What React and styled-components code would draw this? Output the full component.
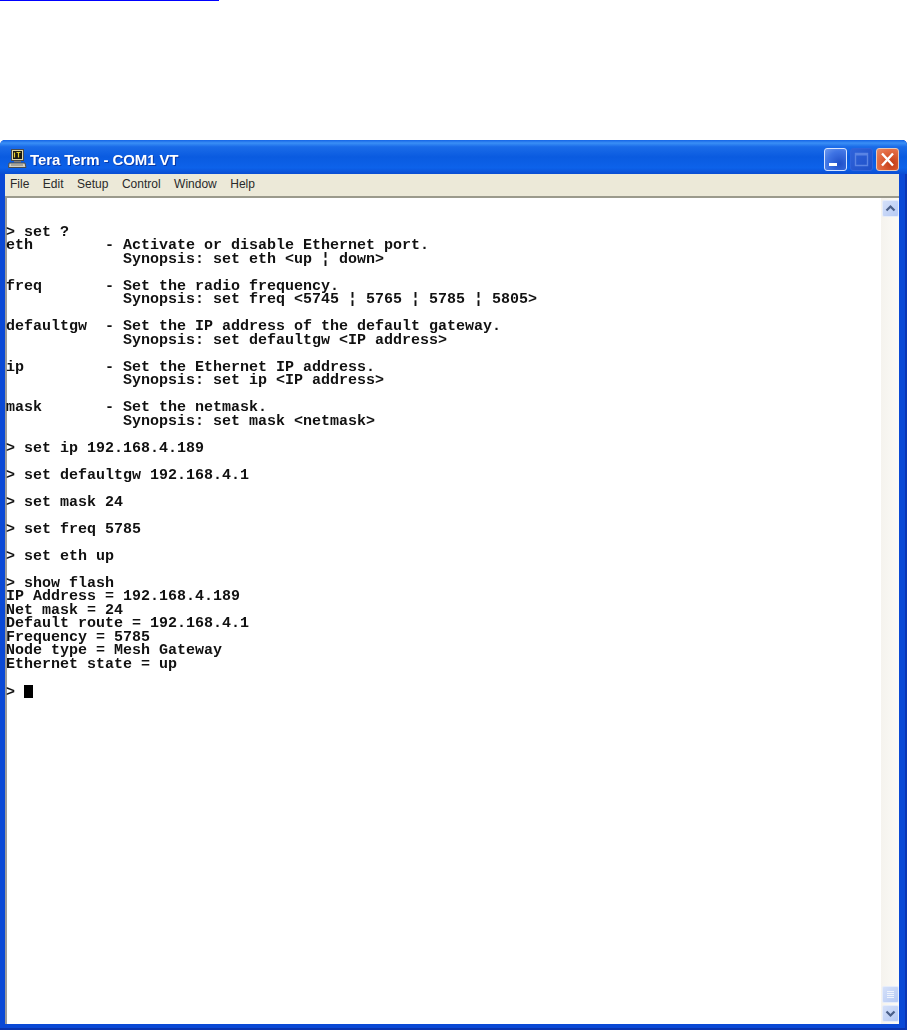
import React from "react";
import styled, { createGlobalStyle } from "styled-components";

const Global = createGlobalStyle`
  html, body { margin: 0; padding: 0; background: #fff; }
  body { width: 907px; height: 1030px; overflow: hidden; }
`;

const Page = styled.div`
  width: 907px;
  height: 1030px;
  display: flex;
  flex-direction: column;
  background: #fff;
`;

const Header = styled.div`
  height: 140px;
  flex: none;
`;

const LinkRule = styled.div`
  width: 219px;
  height: 1px;
  background: #0000ff;
`;

const Win = styled.div`
  flex: 1;
  display: flex;
  flex-direction: column;
  min-height: 0;
  background: #0a49d6;
  border-radius: 5px 5px 0 0;
  overflow: hidden;
  box-shadow: inset -2px 0 0 #0b36b4, inset 0 -2px 0 #0a34ae;
`;

const TitleBar = styled.div`
  height: 34px;
  flex: none;
  display: flex;
  align-items: center;
  padding: 0 8px 0 8px;
  background: linear-gradient(180deg, #1464e6 0%, #3a8ff6 9%, #1a6be8 20%, #0a5be0 50%, #0d62ea 82%, #0a4dd2 100%);
`;

const TitleIcon = styled.svg`
  width: 19px;
  height: 20px;
  flex: none;
  margin: 3px 3px 0 0;
`;

const TitleText = styled.div`
  flex: 1;
  color: #fff;
  font: 700 15px/20px "Liberation Sans", Arial, sans-serif;
  letter-spacing: -0.1px;
  padding-top: 6px;
  text-shadow: 1px 1px 0 #0a3aa8;
  filter: blur(0.3px);
`;

const Controls = styled.div`
  display: flex;
  gap: 3px;
`;

const CtrlButton = styled.div`
  width: 23px;
  height: 23px;
  box-sizing: border-box;
  border: 1px solid ${(p) => (p.$kind === "min" ? "#d6e4ff" : p.$kind === "max" ? "#2f63dc" : "#e6c8b8")};
  border-radius: 3px;
  background: ${(p) =>
    p.$kind === "close"
      ? "radial-gradient(circle at 70% 70%, #c23a14 0%, #e2683f 60%, #e88a68 100%)"
      : p.$kind === "max"
      ? "linear-gradient(135deg, #2f63da, #1f50c8)"
      : "radial-gradient(circle at 70% 70%, #1f4fc8 0%, #3f74e4 60%, #6f9bf0 100%)"};
  display: flex;
  align-items: center;
  justify-content: center;
  flex: none;
  margin-top: 4px;
`;

const CtrlGlyph = styled.svg`
  width: 21px;
  height: 21px;
  display: block;
`;

const Frame = styled.div`
  flex: 1;
  min-height: 0;
  display: flex;
  flex-direction: column;
  margin: 0 8px 6px 5px;
  background: #ece9d8;
`;

const MenuBar = styled.div`
  height: 24px;
  flex: none;
  display: flex;
  align-items: center;
  gap: 13.5px;
  padding: 0 0 2px 5px;
  box-sizing: border-box;
  background: #ece9d8;
  border-bottom: 2px solid #9b9a8c;
  font: 400 12px/16px "Liberation Sans", Arial, sans-serif;
  color: #2a2a2a;
`;

const MenuItem = styled.span`
  display: block;
`;

const Body = styled.div`
  flex: 1;
  min-height: 0;
  display: flex;
  background: #fff;
  border-left: 2px solid #9a9a9a;
`;

const Terminal = styled.pre`
  flex: 1;
  margin: 0 0 0 -1px;
  padding: 27.5px 0 0 0;
  font: 700 15px/13.5px "Liberation Mono", "Courier New", monospace;
  color: #111;
  white-space: pre;
  overflow: hidden;
  filter: blur(0.25px);
`;

const Cursor = styled.span`
  display: inline-block;
  width: 9px;
  height: 13px;
  background: #000;
  vertical-align: -2px;
`;

const ScrollBar = styled.div`
  width: 18px;
  flex: none;
  box-sizing: border-box;
  padding: 2px 0 2px 1px;
  display: flex;
  flex-direction: column;
  gap: 2px;
  background: linear-gradient(90deg, #f5f3ee, #fbfaf6);
`;

const ScrollTrack = styled.div`
  flex: 1;
`;

const ScrollBtn = styled.div`
  width: 17px;
  height: ${(p) => p.$h}px;
  flex: none;
  box-sizing: border-box;
  border: 1px solid #e6edfb;
  border-radius: 2px;
  background: linear-gradient(135deg, #d4e0f9, #b6caf4);
  display: flex;
  align-items: center;
  justify-content: center;
`;

const ScrollGlyph = styled.svg`
  width: 13px;
  height: 13px;
  display: block;
`;

const lines = `
> set ?
eth        - Activate or disable Ethernet port.
             Synopsis: set eth <up ¦ down>

freq       - Set the radio frequency.
             Synopsis: set freq <5745 ¦ 5765 ¦ 5785 ¦ 5805>

defaultgw  - Set the IP address of the default gateway.
             Synopsis: set defaultgw <IP address>

ip         - Set the Ethernet IP address.
             Synopsis: set ip <IP address>

mask       - Set the netmask.
             Synopsis: set mask <netmask>

> set ip 192.168.4.189

> set defaultgw 192.168.4.1

> set mask 24

> set freq 5785

> set eth up

> show flash
IP Address = 192.168.4.189
Net mask = 24
Default route = 192.168.4.1
Frequency = 5785
Node type = Mesh Gateway
Ethernet state = up

> `.slice(1);

const menus = ["File", "Edit", "Setup", "Control", "Window", "Help"];

export default function App() {
  return (
    <Page>
      <Global />
      <Header>
        <LinkRule />
      </Header>
      <Win>
        <TitleBar>
          <TitleIcon viewBox="0 0 19 20">
            <rect x="3.5" y="0.5" width="12" height="11" fill="#e0d8a8" stroke="#4a4a4a" />
            <rect x="5" y="2" width="9" height="8" fill="#1a1a14" />
            <path d="M6.5 3.5v5M8.5 3.5h4M10.5 3.5v5" stroke="#e8d030" strokeWidth="1.2" />
            <rect x="6" y="12" width="7" height="1.5" fill="#7a7a7a" />
            <path d="M1 14h16l1 4.5H0.5z" fill="#d2cfc0" stroke="#4a4a4a" />
            <path d="M3 16h12" stroke="#7a7a7a" />
          </TitleIcon>
          <TitleText>Tera Term - COM1 VT</TitleText>
          <Controls>
            <CtrlButton $kind="min">
              <CtrlGlyph viewBox="0 0 21 21">
                <rect x="4" y="14" width="8" height="3" fill="#fff" />
              </CtrlGlyph>
            </CtrlButton>
            <CtrlButton $kind="max">
              <CtrlGlyph viewBox="0 0 21 21">
                <path d="M4.5 4.5h12v12h-12z" fill="none" stroke="#5a84e4" strokeWidth="1.4" />
                <path d="M4 5.5h13" stroke="#5a84e4" strokeWidth="2" />
              </CtrlGlyph>
            </CtrlButton>
            <CtrlButton $kind="close">
              <CtrlGlyph viewBox="0 0 21 21">
                <path d="M5 4.5l11 12M16 4.5l-11 12" stroke="#fff" strokeWidth="2.4" />
              </CtrlGlyph>
            </CtrlButton>
          </Controls>
        </TitleBar>
        <Frame>
          <MenuBar>
            {menus.map((m) => (
              <MenuItem key={m}>{m}</MenuItem>
            ))}
          </MenuBar>
          <Body>
            <Terminal>
              {lines}
              <Cursor />
            </Terminal>
            <ScrollBar>
              <ScrollBtn $h={17}>
                <ScrollGlyph viewBox="0 0 13 13">
                  <path d="M2.5 8.5l4-4 4 4" fill="none" stroke="#4a5f88" strokeWidth="2.2" />
                </ScrollGlyph>
              </ScrollBtn>
              <ScrollTrack />
              <ScrollBtn $h={17}>
                <ScrollGlyph viewBox="0 0 13 13">
                  <path d="M3 3.5h7M3 5.5h7M3 7.5h7M3 9.5h7" stroke="#eef3fd" strokeWidth="1" />
                </ScrollGlyph>
              </ScrollBtn>
              <ScrollBtn $h={17}>
                <ScrollGlyph viewBox="0 0 13 13">
                  <path d="M2.5 4.5l4 4 4-4" fill="none" stroke="#4a5f88" strokeWidth="2.2" />
                </ScrollGlyph>
              </ScrollBtn>
            </ScrollBar>
          </Body>
        </Frame>
      </Win>
    </Page>
  );
}
